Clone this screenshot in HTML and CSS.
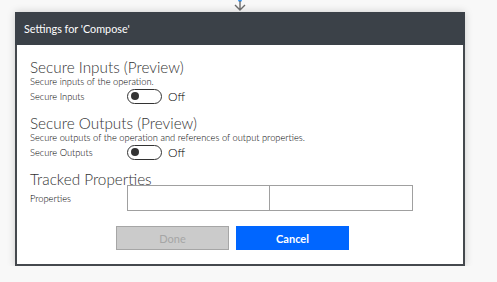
FILE: index.html
```html
<!DOCTYPE html>
<html lang="en">
<head>
    <meta charset="UTF-8">
    <meta name="viewport" content="width=device-width, initial-scale=1.0">
    <title>Settings for 'Compose'</title>
<link rel="stylesheet" href="styles.css">
</head>
<body>
    <div class="canvas">
        <div class="connector">
            <svg width="16" height="12" viewBox="0 0 16 12">
                <circle cx="8" cy="0" r="2" fill="#3a96f0"/>
                <path d="M8 1 L8 10 M3 5 L8 10 L13 5" stroke="#6b6b6b" stroke-width="1.4" fill="none"/>
            </svg>
        </div>

        <div class="dialog">
            <div class="dialog_header">Settings for 'Compose'</div>

            <div class="dialog_body">
                <div class="section">
                    <div class="section_title">Secure Inputs (Preview)</div>
                    <div class="section_desc">Secure inputs of the operation.</div>
                    <div class="field">
                        <span class="field_label">Secure Inputs</span>
                        <span class="toggle"><span class="toggle_knob"></span></span>
                        <span class="toggle_text">Off</span>
                    </div>
                </div>

                <div class="section">
                    <div class="section_title">Secure Outputs (Preview)</div>
                    <div class="section_desc">Secure outputs of the operation and references of output properties.</div>
                    <div class="field">
                        <span class="field_label">Secure Outputs</span>
                        <span class="toggle"><span class="toggle_knob"></span></span>
                        <span class="toggle_text">Off</span>
                    </div>
                </div>

                <div class="section">
                    <div class="section_title">Tracked Properties</div>
                    <div class="field field--props">
                        <span class="field_label">Properties</span>
                        <div class="props">
                            <input type="text" class="props_input">
                            <input type="text" class="props_input">
                        </div>
                    </div>
                </div>

                <div class="form_action--button">
                    <button class="btn btn--done" disabled>Done</button>
                    <button class="btn btn--cancel">Cancel</button>
                </div>
            </div>
        </div>
    </div>
</body>
</html>
```

FILE: styles.css
```css
body{
    margin: 0;
    background: #f8f8f8;
    font-family: Lato, "Open Sans", sans-serif;
    color: #333;
}

.canvas{
    width: 450px;
    margin-left: 15px;
}

.connector{
    height: 12px;
    display: flex;
    justify-content: center;
}

.connector svg{
    display: block;
}

.dialog{
    height: 254px;
    box-sizing: border-box;
    background: #fff;
    border: 2px solid #45494e;
    border-top: none;
    box-shadow: 0 0 8px rgba(0,0,0,0.18);
}

.dialog_header{
    height: 33px;
    margin: 0 -2px;
    padding-left: 9px;
    background: #3b4148;
    color: #fff;
    font-size: 10.8px;
    display: flex;
    align-items: center;
}

.dialog_body{
    padding: 14px 13px 0;
}

.section{
    margin-bottom: 11px;
}

.section_title{
    font-size: 15.3px;
    font-weight: 300;
    line-height: 16px;
}

.section_desc,
.field_label{
    font-size: 9.3px;
    font-weight: 300;
    line-height: 13px;
    color: #000;
}

.field{
    display: flex;
    align-items: center;
    height: 16px;
}

.field_label{
    width: 97px;
}

.toggle{
    width: 30px;
    height: 13px;
    border: 1px solid #333;
    border-radius: 8px;
    display: flex;
    align-items: center;
    padding-left: 3px;
}

.toggle_knob{
    width: 8px;
    height: 8px;
    border-radius: 50%;
    background: #333;
}

.toggle_text{
    margin-left: 6px;
    font-size: 12px;
    font-weight: 300;
    color: #000;
}

.field--props{
    height: auto;
    align-items: center;
    margin-top: -2px;
}

.props{
    display: flex;
}

.props_input{
    width: 143px;
    height: 26px;
    box-sizing: border-box;
    margin: 0;
    border: 1px solid #a0a0a0;
}

.props_input + .props_input{
    border-left: none;
}

.form_action--button{
    display: flex;
    gap: 7px;
    margin-top: 15px;
    padding-left: 86px;
}

.btn{
    width: 113px;
    height: 24px;
    box-sizing: border-box;
    font-family: inherit;
    font-size: 11px;
    padding: 0;
}

.btn--done{
    background: #cbcbcb;
    border: 1px solid #a6a6a6;
    color: #a6a6a6;
}

.btn--cancel{
    background: #0066ff;
    border: none;
    color: #fff;
    font-weight: 700;
    cursor: pointer;
}
```
